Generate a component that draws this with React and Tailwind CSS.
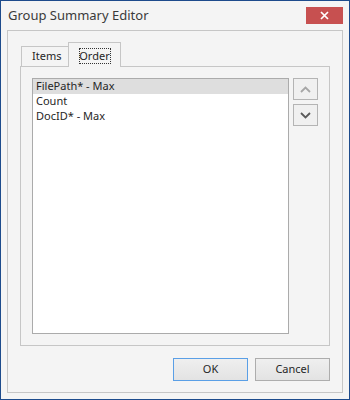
import React from "react";

const font = { fontFamily: '"Noto Sans", "Open Sans", Arial, sans-serif' };

function Chevron({ up, color }) {
  return (
    <svg width="11" height="7" viewBox="0 0 11 7" fill="none">
      <path
        d={up ? "M1 6 L5.5 1.5 L10 6" : "M1 1 L5.5 5.5 L10 1"}
        stroke={color}
        strokeWidth="1.8"
      />
    </svg>
  );
}

function DialogButton({ children, focused }) {
  return (
    <button
      className={
        "flex h-[23px] w-[75px] items-center justify-center border bg-[linear-gradient(180deg,#efefef,#e3e3e3)] text-[11px] text-[#262626] " +
        (focused ? "border-[#5a9fe6]" : "border-[#adadad]")
      }
    >
      {children}
    </button>
  );
}

export default function App() {
  const rows = ["FilePath* - Max", "Count", "DocID* - Max"];

  return (
    <div
      style={font}
      className="flex h-[400px] w-[350px] flex-col border border-[#1d4b8c] bg-[#f4f4f4] text-[#262626]"
    >
      {/* title bar */}
      <div className="flex h-[29px] shrink-0 items-start justify-between">
        <span className="ml-[7px] mt-[5px] text-[13px] leading-[18px] text-[#3a3a3a]">
          Group Summary Editor
        </span>
        <button className="mr-[6px] mt-[6px] flex h-[17px] w-[37px] items-center justify-center bg-[#c75050]">
          <svg width="9" height="9" viewBox="0 0 9 9">
            <path d="M1 1 L8 8 M8 1 L1 8" stroke="#fff" strokeWidth="1.7" />
          </svg>
        </button>
      </div>

      {/* main panel */}
      <div className="mx-[6px] mb-[6px] flex flex-1 flex-col border border-[#c6c6c6] px-[12px] pb-[11px] pt-[11px]">
        <div className="flex flex-1 flex-col">
          {/* tab headers */}
          <div className="flex h-[24px] items-end">
            <div className="ml-[1px] flex h-[20px] w-[47px] items-center border-l border-t border-[#c6c6c6] pl-[10px] text-[11px]">
              Items
            </div>
            <div className="relative z-10 -mb-px flex h-[25px] w-[53px] items-start justify-center border border-b-0 border-[#c6c6c6] bg-[#f4f4f4] pt-[5px]">
              <span className="flex h-[16px] w-[32px] items-center justify-center border border-dotted border-[#333] text-[11px]">
                Order
              </span>
            </div>
          </div>

          {/* tab page */}
          <div className="flex flex-1 gap-[4px] border border-[#c6c6c6] p-[11px]">
            <div className="flex-1 border border-[#ababab] bg-white">
              {rows.map((r, i) => (
                <div
                  key={r}
                  className={
                    "flex h-[15px] items-center pl-[3px] text-[11px] " +
                    (i === 0 ? "bg-[#dedede]" : "")
                  }
                >
                  {r}
                </div>
              ))}
            </div>
            <div className="flex w-[25px] flex-col gap-[4px]">
              <button className="flex h-[22px] items-center justify-center border border-[#b4b4b4] bg-[#f0f0f0]">
                <Chevron up color="#a6a6a6" />
              </button>
              <button className="flex h-[22px] items-center justify-center border border-[#b4b4b4] bg-[#f0f0f0]">
                <Chevron color="#5a5a5a" />
              </button>
            </div>
          </div>
        </div>

        {/* footer buttons */}
        <div className="mt-[12px] flex justify-end gap-[7px]">
          <DialogButton focused>OK</DialogButton>
          <DialogButton>Cancel</DialogButton>
        </div>
      </div>
    </div>
  );
}
